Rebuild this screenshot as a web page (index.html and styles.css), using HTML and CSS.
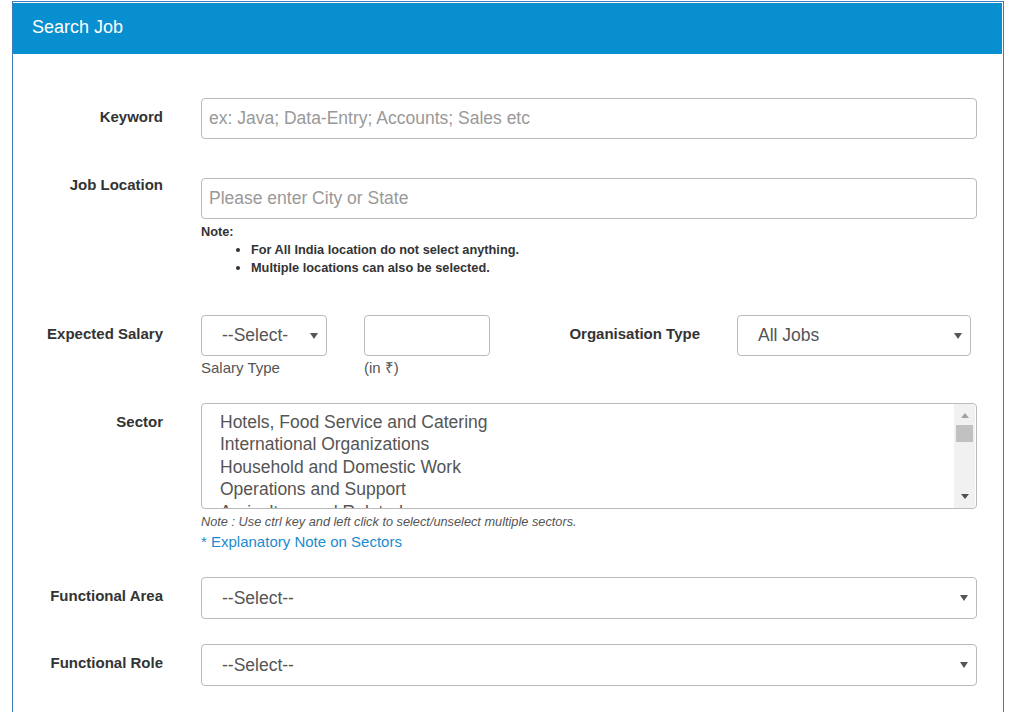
FILE: index.html
```html
<!DOCTYPE html>
<html lang="en">
<head>
<meta charset="utf-8">
<title>Search Job</title>
<link rel="stylesheet" href="styles.css">
</head>
<body>
<div class="panel">
  <div class="panel-heading">Search Job</div>
  <div class="panel-body">
    <div class="row row-keyword">
      <label class="lbl">Keyword</label>
      <div class="field">
        <div class="control"><span class="ph">ex: Java; Data-Entry; Accounts; Sales etc</span></div>
      </div>
    </div>

    <div class="row row-location">
      <label class="lbl lbl-top">Job Location</label>
      <div class="field">
        <div class="control"><span class="ph">Please enter City or State</span></div>
        <div class="note">
          <div>Note:</div>
          <ul>
            <li>For All India location do not select anything.</li>
            <li>Multiple locations can also be selected.</li>
          </ul>
        </div>
      </div>
    </div>

    <div class="row row-salary">
      <label class="lbl">Expected Salary</label>
      <div class="field salary-line">
        <div class="small-box">
          <div class="control select select-sm"><span class="val">--Select-</span><svg class="caret" viewBox="0 0 8 6" width="8" height="6"><path d="M0 0H8L4 6Z"/></svg></div>
          <div class="help">Salary Type</div>
        </div>
        <div class="small-box">
          <div class="control"></div>
          <div class="help">(in ₹)</div>
        </div>
        <label class="lbl org-lbl">Organisation Type</label>
        <div class="org-box">
          <div class="control select"><span class="val">All Jobs</span><svg class="caret" viewBox="0 0 8 6" width="8" height="6"><path d="M0 0H8L4 6Z"/></svg></div>
        </div>
      </div>
    </div>

    <div class="row row-sector">
      <label class="lbl">Sector</label>
      <div class="field">
        <div class="listbox">
          <div class="options">
            <div>Hotels, Food Service and Catering</div>
            <div>International Organizations</div>
            <div>Household and Domestic Work</div>
            <div>Operations and Support</div>
            <div>Agriculture and Related</div>
          </div>
          <div class="scrollbar">
            <svg class="sb-up" viewBox="0 0 8 5" width="8" height="5"><path d="M0 5H8L4 0Z"/></svg>
            <div class="thumb"></div>
            <div class="sb-space"></div>
            <svg class="sb-down" viewBox="0 0 8 5" width="8" height="5"><path d="M0 0H8L4 5Z"/></svg>
          </div>
        </div>
        <div class="italic-note">Note : Use ctrl key and left click to select/unselect multiple sectors.</div>
        <a class="link" href="#">* Explanatory Note on Sectors</a>
      </div>
    </div>

    <div class="row row-area">
      <label class="lbl">Functional Area</label>
      <div class="field">
        <div class="control select"><span class="val">--Select--</span><svg class="caret" viewBox="0 0 8 6" width="8" height="6"><path d="M0 0H8L4 6Z"/></svg></div>
      </div>
    </div>

    <div class="row row-role">
      <label class="lbl">Functional Role</label>
      <div class="field">
        <div class="control select"><span class="val">--Select--</span><svg class="caret" viewBox="0 0 8 6" width="8" height="6"><path d="M0 0H8L4 6Z"/></svg></div>
      </div>
    </div>
  </div>
</div>
</body>
</html>
```

FILE: styles.css
```css
* { box-sizing: border-box; }
html, body { margin: 0; padding: 0; background: #fff; }
body {
  font-family: "Liberation Sans", Arial, sans-serif;
  color: #333;
  height: 712px;
  overflow: hidden;
}
.panel {
  margin: 1px 0 0 12px;
  width: 992px;
  border: 1px solid #3b7cbd;
  border-bottom: none;
  min-height: 720px;
}
.panel-heading {
  background: #078fcf;
  color: #fff;
  font-size: 18px;
  height: 51px;
  line-height: 49px;
  padding-left: 19px;
  margin: 1px 1px 0 0;
}
.panel-body {
  padding: 44px 26px 0 0;
}
.row {
  display: grid;
  grid-template-columns: 150px 1fr;
  column-gap: 38px;
}
.lbl {
  font-weight: bold;
  font-size: 15px;
  line-height: 20px;
  text-align: right;
  padding-top: 9px;
  color: #333;
}
.lbl-top { padding-top: 0; margin-top: -3px; }
.field { min-width: 0; }
.control {
  height: 41px;
  border: 1px solid #bbb;
  border-radius: 4px;
  background: #fff;
  font-size: 17.5px;
  color: #555;
  display: flex;
  align-items: center;
  padding-left: 7px;
  position: relative;
}
.ph { color: #999; }
.select { padding-left: 20px; }
.select .val { color: #555; }
.caret {
  position: absolute;
  right: 8px;
  top: 17px;
  fill: #555;
}
.row-keyword { margin-bottom: 39px; }
.row-location { margin-bottom: 38px; }
.note {
  font-size: 12.75px;
  font-weight: bold;
  line-height: 18px;
  margin-top: 4px;
  color: #333;
}
.note ul {
  margin: 0;
  padding-left: 50px;
}
.row-salary { margin-bottom: 25px; }
.salary-line {
  display: flex;
  align-items: flex-start;
}
.small-box {
  width: 126px;
  margin-right: 37px;
}
.select-sm { padding-left: 20px; }
.help {
  font-size: 15px;
  line-height: 20px;
  margin-top: 2px;
  color: #555;
}
.org-lbl {
  width: 210px;
  margin-right: 37px;
  margin-left: -37px;
}
.org-box { width: 234px; }
.row-sector { margin-bottom: 25px; }
.listbox {
  height: 106px;
  border: 1px solid #bbb;
  border-radius: 4px;
  display: flex;
  overflow: hidden;
}
.options {
  flex: 1;
  padding: 7px 0 0 18px;
  font-size: 17.5px;
  line-height: 22.4px;
  color: #555;
  overflow: hidden;
}
.scrollbar {
  width: 21px;
  margin-right: 1px;
  background: #f1f1f1;
  display: flex;
  flex-direction: column;
  align-items: center;
}
.sb-up { fill: #a3a3a3; margin-top: 9px; }
.thumb {
  width: 17px;
  height: 17px;
  background: #c1c1c1;
  margin-top: 7px;
}
.sb-space { flex: 1; }
.sb-down { fill: #505050; margin-bottom: 9px; }
.italic-note {
  font-size: 12.75px;
  font-style: italic;
  color: #555;
  line-height: 17px;
  margin-top: 4px;
}
.link {
  display: block;
  font-size: 15px;
  line-height: 20px;
  color: #1b8bd0;
  text-decoration: none;
  margin-top: 2px;
}
.row-area { margin-bottom: 25px; }
.row-role .control { height: 42px; }
.row-area .control { height: 42px; }
```
